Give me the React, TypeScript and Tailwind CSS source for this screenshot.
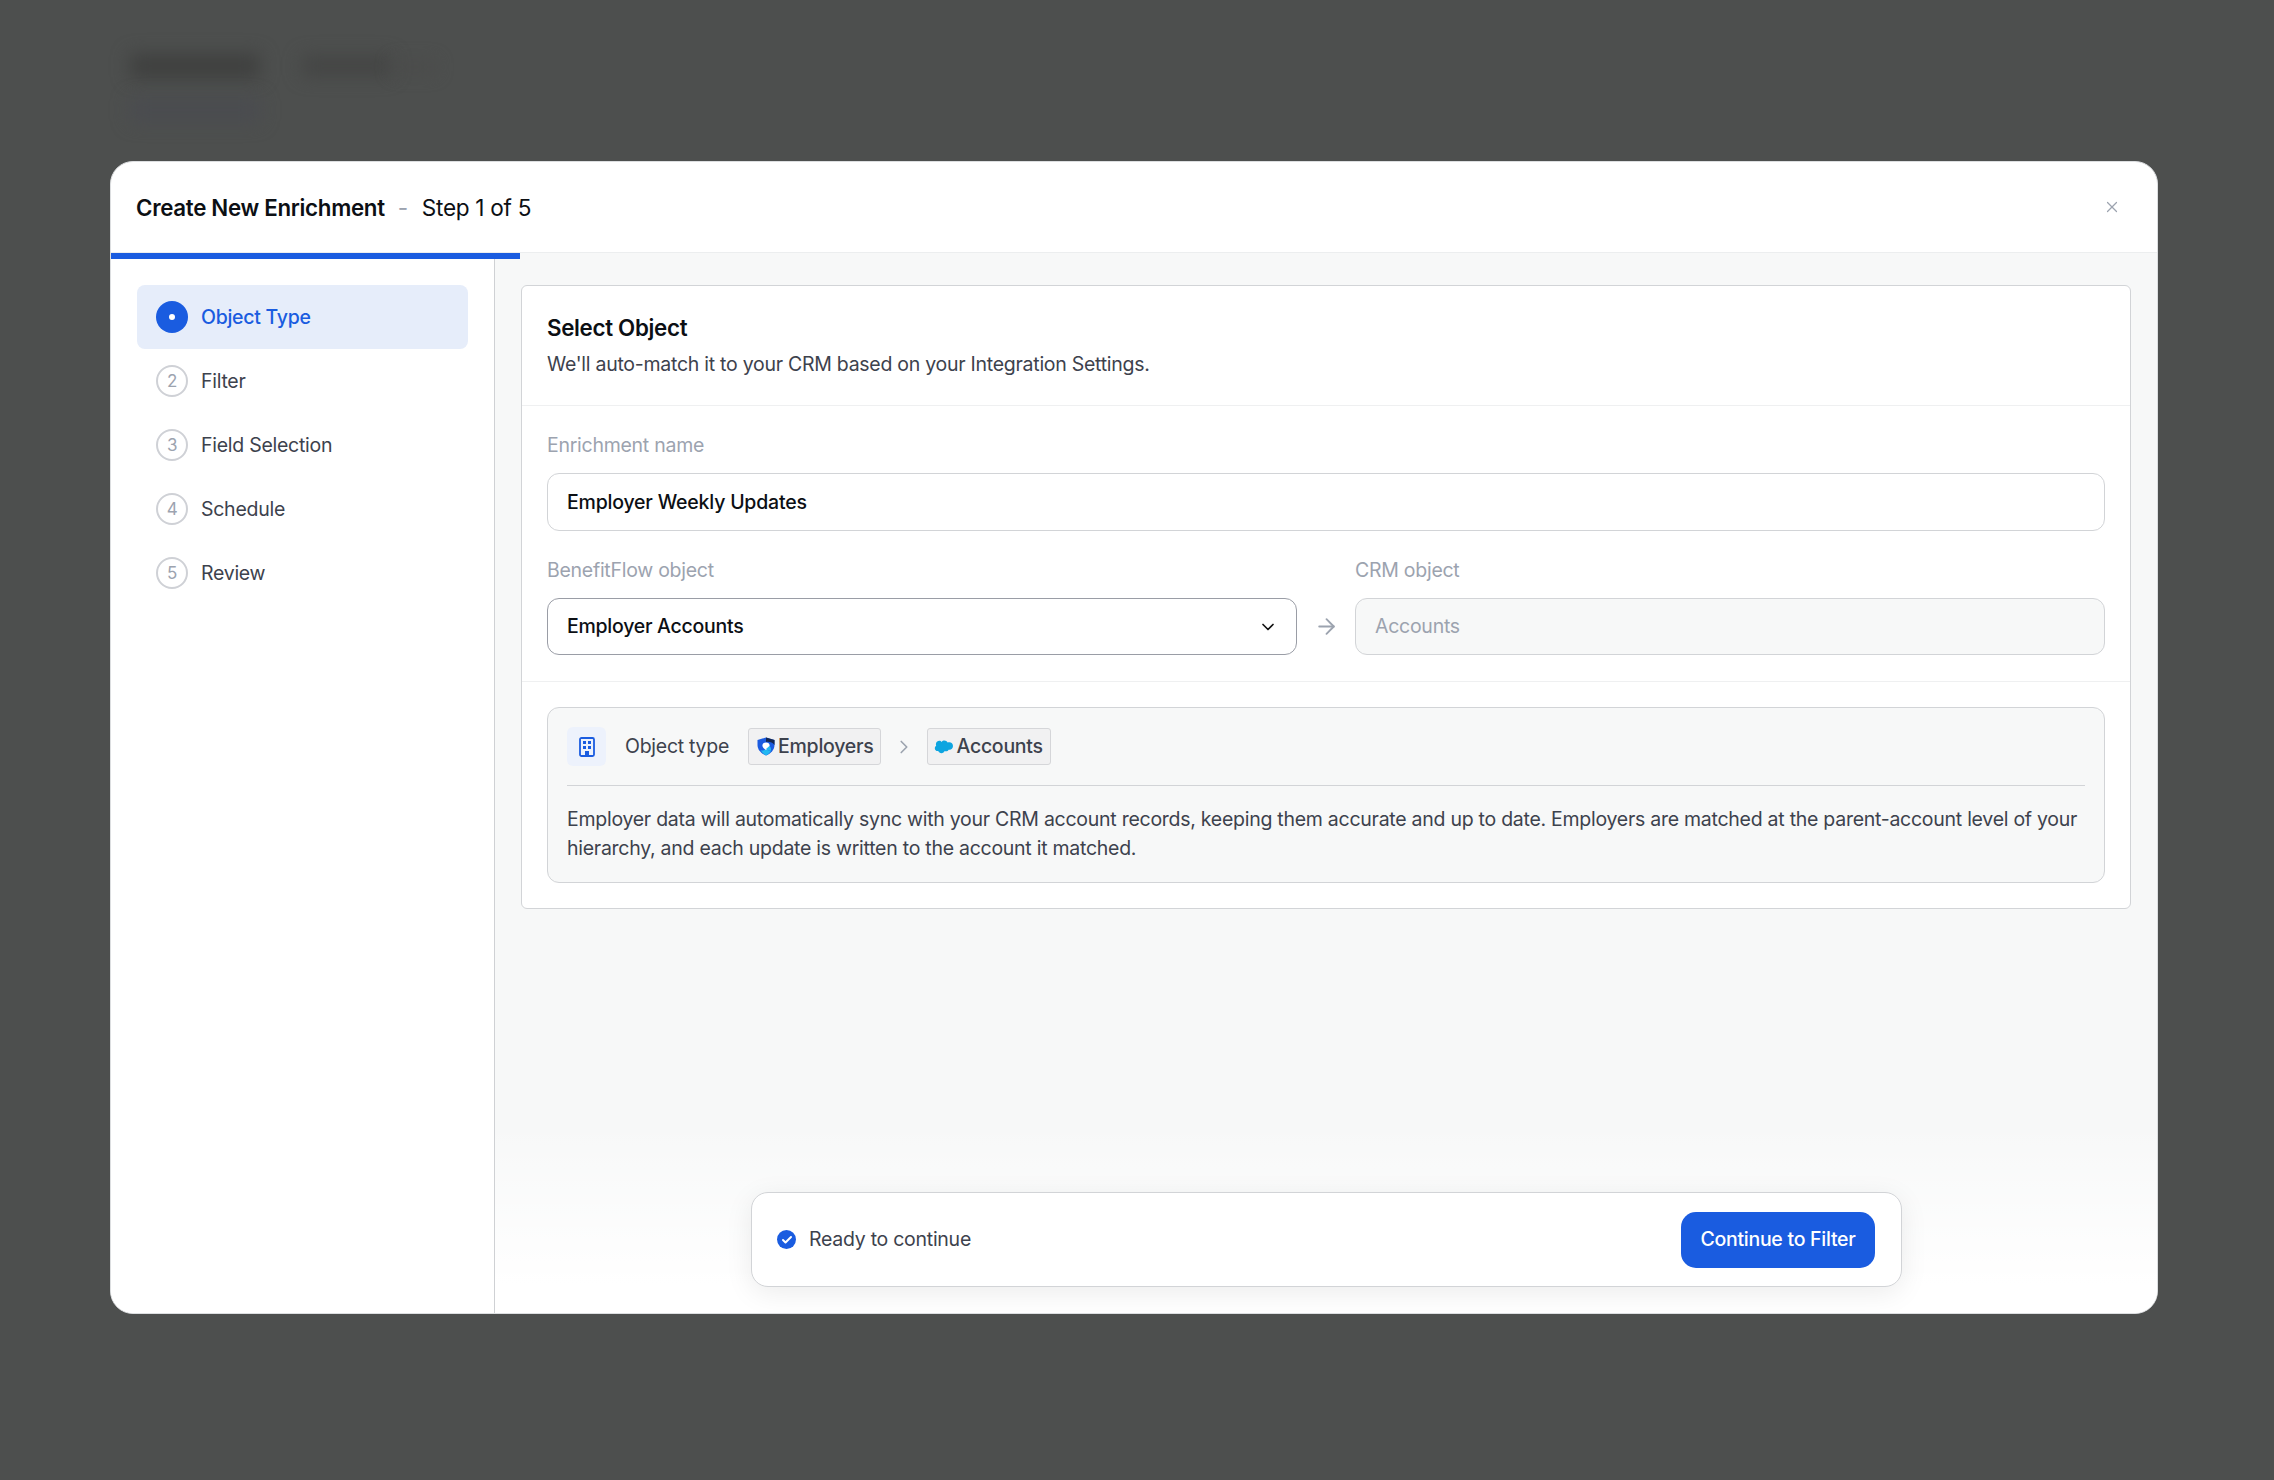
import { ChevronDown, ChevronRight, ArrowRight, X, Check } from "lucide-react";

const steps = ["Filter", "Field Selection", "Schedule", "Review"];

function ShieldLogo() {
  return (
    <svg width="18" height="19" viewBox="0 0 18 19" className="shrink-0">
      <path d="M9 0.5 L17.5 3 V8 C17.5 12.5 14 16.5 9 18.5 C4 16.5 0.5 12.5 0.5 8 V3 Z" fill="#1b5be0" />
      <path d="M9 0.5 L17.5 3 V8 C15.5 5 12 4.6 9 5 Z" fill="#14264f" />
      <path d="M9 18.5 C6.5 17.2 4.8 15.4 3.6 13 C5.2 14 6.5 13.6 9 12 C11.5 13.6 12.8 14 14.4 13 C13.2 15.4 11.5 17.2 9 18.5 Z" fill="#22b8f2" />
      <path d="M9 5.5 C11.2 5.5 12.6 6.8 12.6 8.4 C12.6 10 11 11.6 9 13 C7 11.6 5.4 10 5.4 8.4 C5.4 6.8 6.8 5.5 9 5.5 Z" fill="#ffffff" />
      <path d="M14 13.2 C12.6 14 11 13.4 9 12 L12.4 9 C13.6 10 14.2 11.6 14 13.2 Z" fill="#22b8f2" />
    </svg>
  );
}

function CloudLogo() {
  return (
    <svg width="19" height="14" viewBox="0 0 19 14" className="shrink-0">
      <path d="M7.6 1.9 C8.3 1.1 9.3 0.6 10.4 0.6 C11.8 0.6 13 1.4 13.7 2.5 C14.2 2.3 14.8 2.2 15.4 2.2 C17.4 2.2 19 3.9 19 6 C19 8.1 17.4 9.8 15.4 9.8 C15.1 9.8 14.9 9.8 14.6 9.7 C14.1 10.7 13.1 11.3 11.9 11.3 C11.4 11.3 11 11.2 10.6 11 C10.1 12.3 8.9 13.2 7.5 13.2 C6 13.2 4.8 12.3 4.3 11 C4.1 11.1 3.8 11.1 3.6 11.1 C2.1 11.1 0.8 9.8 0.8 8.2 C0.8 7.1 1.4 6.2 2.2 5.7 C2 5.2 1.9 4.7 1.9 4.2 C1.9 2.2 3.5 0.7 5.4 0.7 C6.3 0.7 7.1 1.2 7.6 1.9 Z" fill="#0ea5e0" />
    </svg>
  );
}

function BuildingIcon() {
  return (
    <svg width="16" height="20" viewBox="0 0 16 20" fill="none" className="shrink-0">
      <rect x="1" y="1" width="14" height="18" rx="1.5" stroke="#1a5ce0" strokeWidth="1.8" />
      <rect x="4" y="4" width="3" height="3" fill="#1a5ce0" />
      <rect x="9" y="4" width="3" height="3" fill="#1a5ce0" />
      <rect x="4" y="9" width="3" height="3" fill="#1a5ce0" />
      <rect x="9" y="9" width="3" height="3" fill="#1a5ce0" />
      <rect x="6" y="14" width="4" height="5" fill="#1a5ce0" />
    </svg>
  );
}

export default function App() {
  return (
    <div className="relative h-[1480px] w-full overflow-hidden bg-[#4d4f4e] pl-[110px] pt-[161px] font-[Inter,sans-serif] text-[19.5px] leading-[29px] tracking-[-0.265px] text-[#3d424d]">
      <div className="absolute left-[130px] top-[54px] h-[24px] w-[130px] rounded bg-[#3f403f] blur-[9px]" />
      <div className="absolute left-[302px] top-[56px] h-[20px] w-[90px] rounded bg-[#444544] blur-[9px]" />
      <div className="absolute left-[392px] top-[60px] h-[14px] w-[44px] rounded bg-[#4b4c4b] blur-[8px]" />
      <div className="absolute left-[130px] top-[98px] h-[24px] w-[130px] rounded bg-[#4a4c50] blur-[9px]" />

      <div className="flex h-[1153px] w-[2048px] flex-col overflow-hidden rounded-[23px] border border-[#dcdee0] bg-white">
        <header className="flex h-[91px] shrink-0 items-center justify-between border-b border-[#eceeef] pl-[25px] pr-[36px]">
          <div className="flex items-center text-[22.6px] leading-[33px] tracking-[-0.3px] text-[#0c0f14]">
            <span className="text-[22.3px] font-semibold">Create New Enrichment</span>
            <span className="ml-[13px] mr-[14px] text-[#9ca3af]">-</span>
            <span>Step 1 of 5</span>
          </div>
          <X size={18} strokeWidth={1.6} className="text-[#9ca3af]" />
        </header>

        <div className="relative flex min-h-0 flex-1">
          <div className="absolute left-0 top-0 z-10 h-[6px] w-[409px] bg-[#1a5ce0]" />

          <aside className="w-[384px] shrink-0 border-r border-[#cfd1d4] bg-white pl-[26px] pr-[26px] pt-[32px]">
            <div className="flex h-[64px] items-center rounded-[8px] bg-[#e6edfa] pl-[19px] font-medium text-[#1a5ce0]">
              <span className="flex size-[32px] items-center justify-center rounded-full bg-[#1a5ce0]">
                <span className="size-[6px] rounded-full bg-white" />
              </span>
              <span className="ml-[13px]">Object Type</span>
            </div>
            {steps.map((s, i) => (
              <div key={s} className="flex h-[64px] items-center pl-[19px]">
                <span className="flex size-[32px] items-center justify-center rounded-full border-2 border-[#cfd1d6] text-[17px] text-[#9ca3af]">
                  {i + 2}
                </span>
                <span className="ml-[13px]">{s}</span>
              </div>
            ))}
          </aside>

          <main className="relative min-w-0 flex-1 bg-[#f7f8f8] pl-[26px] pr-[26px] pt-[32px]">
            <div className="absolute inset-x-0 bottom-0 h-[190px] bg-gradient-to-b from-transparent to-white to-[85%]" />

            <section className="relative rounded-[6px] border border-[#d2d4d7] bg-white">
              <div className="border-b border-[#eff0f1] px-[25px] pb-[26px] pt-[25px]">
                <h2 className="text-[22.3px] font-semibold leading-[33px] tracking-[-0.3px] text-[#0c0f14]">Select Object</h2>
                <p className="mt-[6px]">We'll auto-match it to your CRM based on your Integration Settings.</p>
              </div>

              <div className="border-b border-[#eff0f1] px-[25px] pb-[26px] pt-[25px]">
                <div className="text-[#9ca3af]">Enrichment name</div>
                <div className="mt-[13px] flex h-[58px] items-center rounded-[12px] border border-[#d2d4d7] bg-white px-[19px] font-medium tracking-[-0.2px] text-[#0c0f14]">
                  Employer Weekly Updates
                </div>

                <div className="mt-[25px] flex items-end">
                  <div className="w-[750px] shrink-0">
                    <div className="text-[#9ca3af]">BenefitFlow object</div>
                    <div className="mt-[13px] flex h-[57px] items-center justify-between rounded-[12px] border border-[#9a9da6] bg-white pl-[19px] pr-[18px] font-medium text-[#0c0f14]">
                      Employer Accounts
                      <ChevronDown size={20} strokeWidth={2} className="text-[#111]" />
                    </div>
                  </div>
                  <div className="flex h-[57px] w-[58px] shrink-0 items-center justify-center">
                    <ArrowRight size={25} strokeWidth={1.8} className="text-[#9ca3af]" />
                  </div>
                  <div className="min-w-0 flex-1">
                    <div className="text-[#9ca3af]">CRM object</div>
                    <div className="mt-[13px] flex h-[57px] items-center rounded-[12px] border border-[#d2d4d7] bg-[#f7f8f8] px-[19px] text-[#9ca3af]">
                      Accounts
                    </div>
                  </div>
                </div>
              </div>

              <div className="px-[25px] py-[25px]">
                <div className="rounded-[12px] border border-[#d2d4d7] bg-[#f7f8f8] px-[19px] pb-[19px] pt-[19px]">
                  <div className="flex items-center border-b border-[#d2d4d7] pb-[19px]">
                    <span className="flex size-[39px] items-center justify-center rounded-[6px] bg-[#edf2fc]">
                      <BuildingIcon />
                    </span>
                    <span className="ml-[19px]">Object type</span>
                    <span className="ml-[19px] flex h-[37px] items-center gap-[3px] rounded-[3px] border border-[#d5d6d9] bg-[#f1f1f2] pl-[8px] pr-[7px] font-medium">
                      <ShieldLogo />
                      Employers
                    </span>
                    <ChevronRight size={22} strokeWidth={1.8} className="ml-[12px] mr-[12px] text-[#9ca3af]" />
                    <span className="flex h-[37px] items-center gap-[3px] rounded-[3px] border border-[#d5d6d9] bg-[#f1f1f2] pl-[6px] pr-[7px] font-medium">
                      <CloudLogo />
                      Accounts
                    </span>
                  </div>
                  <p className="mt-[19px]">
                    Employer data will automatically sync with your CRM account records, keeping them accurate and up to date. Employers are matched at the parent-account level of your hierarchy, and each update is written to the account it matched.
                  </p>
                </div>
              </div>
            </section>

            <div className="absolute bottom-[26px] left-[256px] flex h-[95px] w-[1151px] items-center justify-between rounded-[17px] border border-[#d2d4d7] bg-white pl-[25px] pr-[26px] shadow-[0_6px_28px_rgba(0,0,0,0.08)]">
              <div className="flex items-center gap-[13px]">
                <span className="flex size-[19px] items-center justify-center rounded-full bg-[#1a5ce0]">
                  <Check size={12} strokeWidth={4} className="text-white" />
                </span>
                Ready to continue
              </div>
              <button className="flex h-[56px] w-[194px] items-center justify-center rounded-[15px] bg-[#1a5ce0] font-medium text-white">
                Continue to Filter
              </button>
            </div>
          </main>
        </div>
      </div>
    </div>
  );
}
